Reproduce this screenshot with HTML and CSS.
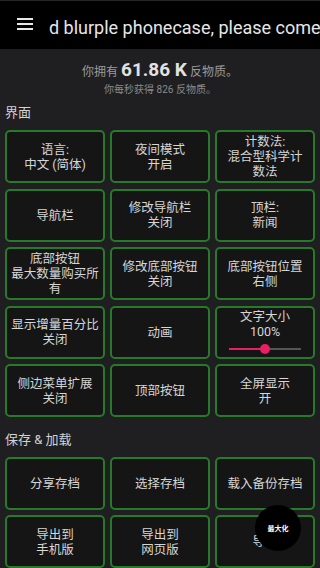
FILE: index.html
```html
<!DOCTYPE html>
<html lang="zh-CN">
<head>
<meta charset="utf-8">
<link rel="stylesheet" href="styles.css">
</head>
<body>
<header class="topbar">
  <svg class="menu-icon" width="16" height="14" viewBox="0 0 16 14"><rect x="0" y="1" width="16" height="2" fill="#e8e8e8"/><rect x="0" y="6" width="16" height="2" fill="#e8e8e8"/><rect x="0" y="11" width="16" height="2" fill="#e8e8e8"/></svg>
  <div class="ticker">d blurple phonecase, please come</div>
</header>
<div class="info">
  <div class="info-main">你拥有 <b class="amount">61.86 K</b> 反物质。</div>
  <div class="info-sub">你每秒获得 826 反物质。</div>
</div>
<section class="section">
  <div class="section-title">界面</div>
  <div class="grid">
    <div class="btn">语言:<br>中文 (简体)</div>
    <div class="btn">夜间模式<br>开启</div>
    <div class="btn">计数法:<br>混合型科学计<br>数法</div>
    <div class="btn">导航栏</div>
    <div class="btn">修改导航栏<br>关闭</div>
    <div class="btn">顶栏:<br>新闻</div>
    <div class="btn">底部按钮<br>最大数量购买所<br>有</div>
    <div class="btn">修改底部按钮<br>关闭</div>
    <div class="btn">底部按钮位置<br>右侧</div>
    <div class="btn">显示增量百分比<br>关闭</div>
    <div class="btn">动画</div>
    <div class="btn btn-slider">
      <div>文字大小<br>100%</div>
      <div class="slider"><div class="slider-fill"></div><div class="slider-thumb"></div></div>
    </div>
    <div class="btn">侧边菜单扩展<br>关闭</div>
    <div class="btn">顶部按钮</div>
    <div class="btn">全屏显示<br>开</div>
  </div>
</section>
<section class="section">
  <div class="section-title">保存 &amp; 加载</div>
  <div class="grid">
    <div class="btn">分享存档</div>
    <div class="btn">选择存档</div>
    <div class="btn">载入备份存档</div>
    <div class="btn">导出到<br>手机版</div>
    <div class="btn">导出到<br>网页版</div>
    <div class="btn">导入</div>
  </div>
</section>
<div class="fab">最大化</div>
</body>
</html>
```
FILE: styles.css
```css
html, body {
  margin: 0;
  padding: 0;
}
body {
  width: 320px;
  height: 568px;
  overflow: hidden;
  background: #1f1f22;
  font-family: "Roboto", "Noto Sans CJK SC", sans-serif;
  color: #d4d4d4;
  position: relative;
}
.topbar {
  height: 48px;
  border-top: 1px solid #262626;
  background: #000;
  display: flex;
  align-items: center;
  padding-left: 17px;
  gap: 16px;
  overflow: hidden;
}
.menu-icon {
  flex: none;
  margin-top: -2px;
}
.ticker {
  flex: 1;
  min-width: 0;
  white-space: nowrap;
  overflow: hidden;
  font-size: 18px;
  color: #e6e6e6;
  padding-top: 4px;
  font-family: "Roboto", sans-serif;
}
.info {
  padding-top: 10px;
  text-align: center;
  color: #9a9a9a;
}
.info-main {
  font-size: 12px;
  line-height: 22px;
}
.amount {
  font-family: "Roboto", sans-serif;
  font-weight: 700;
  font-size: 19px;
  color: #e2e2e2;
}
.info-sub {
  font-size: 10px;
  line-height: 14px;
  color: #8a8a8a;
}
.section {
  padding-top: 7px;
}
.section-title {
  padding: 0 5px;
  font-size: 13px;
  line-height: 18px;
  color: #d2d2d2;
  margin-bottom: 8px;
}
.grid {
  display: grid;
  grid-template-columns: repeat(3, 1fr);
  grid-auto-rows: 53px;
  column-gap: 5px;
  row-gap: 5.5px;
  padding: 0 5px;
  margin-bottom: 6.5px;
}
.btn {
  box-sizing: border-box;
  border: 2px solid #277a29;
  border-radius: 5px;
  background: #151515;
  display: flex;
  align-items: center;
  justify-content: center;
  text-align: center;
  font-size: 12.5px;
  line-height: 15px;
  color: #d6d6d6;
  padding: 0 2px;
}
.btn-slider {
  flex-direction: column;
  justify-content: flex-start;
  padding-top: 1px;
}
.slider {
  position: relative;
  width: 72px;
  height: 2px;
  background: #555;
  margin-top: 9.5px;
}
.slider-fill {
  width: 50%;
  height: 2px;
  background: #e91e63;
}
.slider-thumb {
  position: absolute;
  left: 31px;
  top: -4px;
  width: 10px;
  height: 10px;
  border-radius: 50%;
  background: #e91e63;
}
.fab {
  position: absolute;
  left: 255px;
  top: 505px;
  width: 46px;
  height: 46px;
  border-radius: 50%;
  background: #000;
  color: #fff;
  font-size: 7px;
  font-weight: 700;
  display: flex;
  align-items: center;
  justify-content: center;
}
```
